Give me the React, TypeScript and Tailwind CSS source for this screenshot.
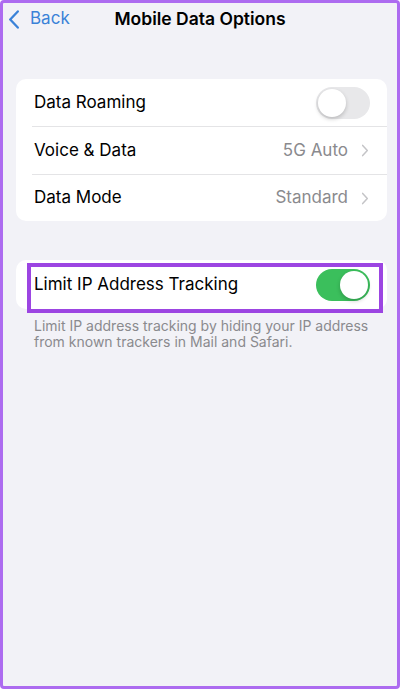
import React from 'react';

const font = { fontFamily: 'Inter, "Noto Sans", sans-serif' };

const Toggle = ({ on }: { on: boolean }) => (
  <div
    className={`relative h-[32px] w-[54px] rounded-full ${on ? 'bg-[#3bbf5c]' : 'bg-[#e8e8ea]'}`}
  >
    <div
      className={`absolute top-[2px] h-[28px] w-[28px] rounded-full bg-white shadow-[0_2px_4px_rgba(0,0,0,0.2)] ${on ? 'right-[2px]' : 'left-[2px]'}`}
    />
  </div>
);

const Chevron = ({ className = '' }: { className?: string }) => (
  <svg viewBox="0 0 8 14" className={className} fill="none">
    <path d="M1.5 1.5 L6.5 7 L1.5 12.5" stroke="currentColor" strokeWidth="1.6" strokeLinecap="round" strokeLinejoin="round" />
  </svg>
);

const Row = ({ label, value, h }: { label: string; value: string; h: string }) => (
  <div className={`flex ${h} items-center pl-[18px] pr-[18px]`}>
    <span className="flex-1 text-[17px] text-black">{label}</span>
    <span className="text-[17px] text-[#8a8a8e]">{value}</span>
    <Chevron className="ml-[13px] h-[13px] w-[8px] text-[#c4c4c7]" />
  </div>
);

export default function App() {
  return (
    <div style={font} className="h-[689px] w-[400px] overflow-hidden rounded-[4px] border-[3px] border-[#ad6cf0] bg-[#f2f2f7]">
      {/* nav bar */}
      <div className="relative flex h-[32px] items-center">
        <div className="flex items-center pl-[5px] text-[#3b82d8]">
          <svg viewBox="0 0 12 20" className="h-[19px] w-[12px]" fill="none">
            <path d="M10 1.5 L2 10 L10 18.5" stroke="currentColor" strokeWidth="2.4" strokeLinecap="round" strokeLinejoin="round" />
          </svg>
          <span className="ml-[10px] text-[17px]">Back</span>
        </div>
        <div className="absolute inset-x-0 top-0 flex h-[32px] items-center justify-center pointer-events-none">
          <span className="text-[17.5px] font-semibold text-black">Mobile Data Options</span>
        </div>
      </div>

      {/* first group */}
      <div className="ml-[13px] mr-[10px] mt-[44px] rounded-[10px] bg-white">
        <div className="flex h-[47px] items-center pl-[18px] pr-[17px]">
          <span className="flex-1 text-[17px] text-black">Data Roaming</span>
          <Toggle on={false} />
        </div>
        <div className="ml-[16px] h-px bg-[#e4e4e6]" />
        <Row label="Voice & Data" value="5G Auto" h="h-[47px]" />
        <div className="ml-[16px] h-px bg-[#e4e4e6]" />
        <Row label="Data Mode" value="Standard" h="h-[46px]" />
      </div>

      {/* second group */}
      <div className="relative ml-[13px] mr-[10px] mt-[39px] rounded-[10px] bg-white">
        <div className="flex h-[49px] items-center pl-[18px] pr-[17px]">
          <span className="flex-1 text-[17px] text-black">Limit IP Address Tracking</span>
          <Toggle on />
        </div>
        <div className="absolute top-[3px] left-[11px] right-[4px] h-[50px] border-[4px] border-[#9c45e2]" />
      </div>
      <p className="mt-[9px] pl-[31px] pr-[16px] text-[14px] leading-[16px] text-[#8a8a8e]">
        Limit IP address tracking by hiding your IP address from known trackers in Mail and Safari.
      </p>
    </div>
  );
}
